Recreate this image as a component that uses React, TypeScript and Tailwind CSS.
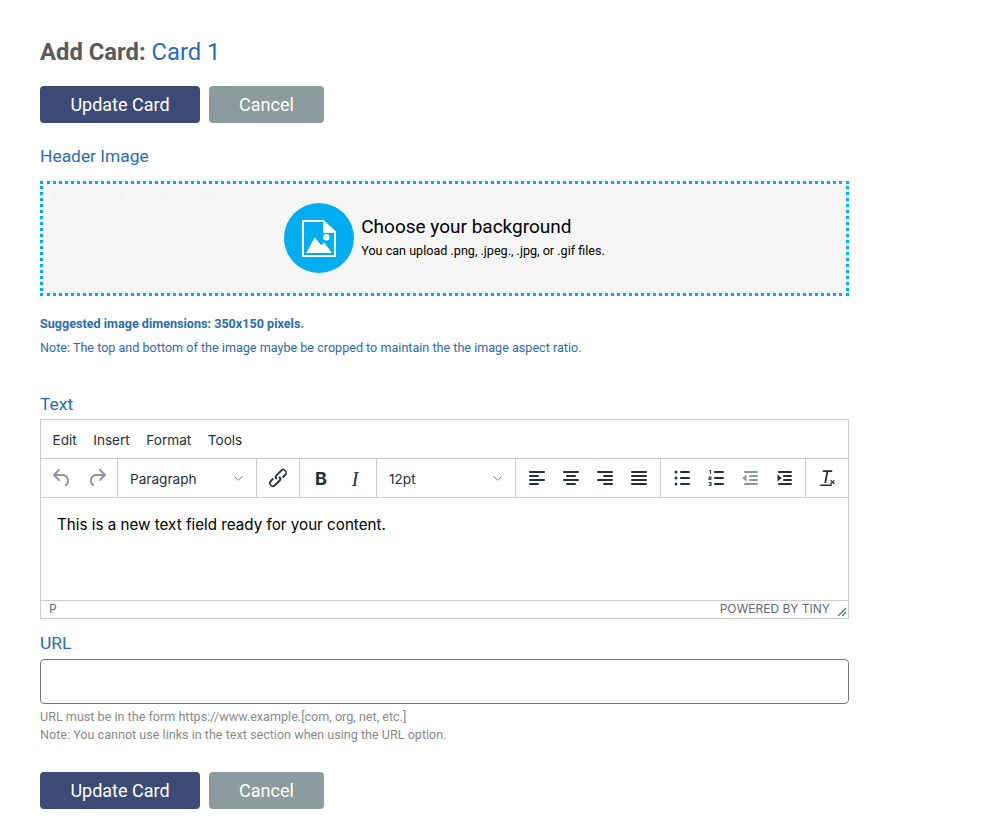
import { ChevronDown } from 'lucide-react';
import type { ReactNode } from 'react';

const Actions = () => (
  <div className="flex gap-[9px]">
    <button type="button" className="h-[37px] w-[160px] rounded-[4px] bg-[#3c4a76] text-[18px] text-white">
      Update Card
    </button>
    <button type="button" className="h-[37px] w-[115px] rounded-[4px] bg-[#8c9c9e] text-[18px] text-white">
      Cancel
    </button>
  </div>
);

const Label = ({ children }: { children: ReactNode }) => (
  <div className="text-[17.4px] leading-[24px] text-[#2b6cb0]">{children}</div>
);

const Icon = ({ d, className = 'text-[#222f3e]' }: { d: string; className?: string }) => (
  <svg width="24" height="24" viewBox="0 0 24 24" fill="currentColor" className={className}>
    <path d={d} />
  </svg>
);

const icons = {
  undo: 'M6.4 8H12c3.7 0 6.2 2 6.8 5.1.6 2.7-.4 5.6-2.3 6.8a1 1 0 0 1-1-1.800c1.100-.6 1.800-2.700 1.400-4.600-.5-2.100-2.100-3.500-4.900-3.500H6.400l3.300 3.300a1 1 0 1 1-1.400 1.400l-5-5a1 1 0 0 1 0-1.400l5-5a1 1 0 0 1 1.400 1.400L6.400 8z',
  redo: 'M17.6 10H12c-2.800 0-4.400 1.400-4.900 3.500-.4 2 .3 4 1.400 4.600a1 1 0 1 1-1 1.800c-2-1.200-2.900-4.100-2.300-6.800.6-3 3.100-5.100 6.800-5.100h5.600l-3.300-3.300a1 1 0 1 1 1.400-1.400l5 5a1 1 0 0 1 0 1.400l-5 5a1 1 0 0 1-1.400-1.400l3.300-3.300z',
  link: 'M6.200 12.300a1 1 0 0 1 1.400 1.400l-2.100 2.100a2 2 0 1 0 2.800 2.800l4.800-4.800a1 1 0 0 0 0-1.400 1 1 0 1 1 1.400-1.300 2.900 2.900 0 0 1 0 4L9.600 20a3.900 3.900 0 0 1-5.500-5.500l2-2.200zm11.600-.6a1 1 0 0 1-1.400-1.400l2-2a2 2 0 1 0-2.700-2.800L11 10a1 1 0 0 0 0 1.400A1 1 0 1 1 9.600 13a2.900 2.900 0 0 1 0-4L14.400 4a3.900 3.900 0 0 1 5.500 5.500l-2.100 2.200z',
  alignLeft: 'M5 5h14a1 1 0 0 1 0 2H5a1 1 0 1 1 0-2zm0 4h8a1 1 0 0 1 0 2H5a1 1 0 1 1 0-2zm0 8h8a1 1 0 0 1 0 2H5a1 1 0 0 1 0-2zm0-4h14a1 1 0 0 1 0 2H5a1 1 0 0 1 0-2z',
  alignCenter: 'M5 5h14a1 1 0 0 1 0 2H5a1 1 0 1 1 0-2zm3 4h8a1 1 0 0 1 0 2H8a1 1 0 1 1 0-2zm0 8h8a1 1 0 0 1 0 2H8a1 1 0 0 1 0-2zm-3-4h14a1 1 0 0 1 0 2H5a1 1 0 0 1 0-2z',
  alignRight: 'M5 5h14a1 1 0 0 1 0 2H5a1 1 0 1 1 0-2zm6 4h8a1 1 0 0 1 0 2h-8a1 1 0 0 1 0-2zm0 8h8a1 1 0 0 1 0 2h-8a1 1 0 0 1 0-2zm-6-4h14a1 1 0 0 1 0 2H5a1 1 0 0 1 0-2z',
  justify: 'M5 5h14a1 1 0 0 1 0 2H5a1 1 0 1 1 0-2zm0 4h14a1 1 0 0 1 0 2H5a1 1 0 1 1 0-2zm0 4h14a1 1 0 0 1 0 2H5a1 1 0 0 1 0-2zm0 4h14a1 1 0 0 1 0 2H5a1 1 0 0 1 0-2z',
  bullets: 'M11 5h8a1 1 0 0 1 0 2h-8a1 1 0 0 1 0-2zm0 6h8a1 1 0 0 1 0 2h-8a1 1 0 0 1 0-2zm0 6h8a1 1 0 0 1 0 2h-8a1 1 0 0 1 0-2zM4.500 6a1.500 1.500 0 1 1 3 0 1.500 1.500 0 0 1-3 0zm0 6a1.500 1.500 0 1 1 3 0 1.500 1.500 0 0 1-3 0zm0 6a1.500 1.500 0 1 1 3 0 1.500 1.500 0 0 1-3 0z',
  numbers: 'M11 5h8a1 1 0 0 1 0 2h-8a1 1 0 0 1 0-2zm0 6h8a1 1 0 0 1 0 2h-8a1 1 0 0 1 0-2zm0 6h8a1 1 0 0 1 0 2h-8a1 1 0 0 1 0-2zM6 4h1v4H6V5H5V4.500zM4.500 10.500h3v2.200H5.500v.6h2v.7h-3v-2.200h2v-.6h-2zM4.500 16h3v4h-3v-.7h2v-.9h-1.500v-.7h1.500v-1h-2z',
  outdent: 'M7 5h12a1 1 0 0 1 0 2H7a1 1 0 1 1 0-2zm5 4h7a1 1 0 0 1 0 2h-7a1 1 0 0 1 0-2zm0 4h7a1 1 0 0 1 0 2h-7a1 1 0 0 1 0-2zm-5 4h12a1 1 0 0 1 0 2H7a1 1 0 0 1 0-2zM4.300 12L8.500 8.500v7z',
  indent: 'M7 5h12a1 1 0 0 1 0 2H7a1 1 0 1 1 0-2zm5 4h7a1 1 0 0 1 0 2h-7a1 1 0 0 1 0-2zm0 4h7a1 1 0 0 1 0 2h-7a1 1 0 0 1 0-2zm-5 4h12a1 1 0 0 1 0 2H7a1 1 0 0 1 0-2zM9.700 12L5.500 8.500v7z',
  clear: 'M13.200 6l-2.100 11H9.500a.9.900 0 0 0 0 0h-.2l2.100-11H8.500a.9.900 0 0 1 0-1.800h8a.9.900 0 0 1 0 1.800h-3.300zM5.800 18.500h10.400a.8.800 0 0 1 0 1.600H5.800a.8.800 0 0 1 0-1.600zM16 13.800l1.500 1.500 1.500-1.500.8.800-1.500 1.500 1.500 1.500-.8.800-1.500-1.500-1.500 1.500-.8-.8 1.500-1.500-1.500-1.500z',
};

const Select = ({ label }: { label: string }) => (
  <div className="flex h-full w-[139px] items-center justify-between border-r border-[#ccc] pl-[12px] pr-[10px] text-[13.6px] text-[#222f3e]">
    <span className="mt-[3px]">{label}</span>
    <ChevronDown size={15} strokeWidth={1.5} className="mt-[1px] text-[#6b7683]" />
  </div>
);

const Editor = () => (
  <div className="flex h-[200px] flex-col border border-[#ccc] font-['Inter',sans-serif] text-[#222f3e]">
    <div className="flex h-[39px] shrink-0 items-center gap-[16.500px] border-b border-[#ccc] pl-[11.5px] pt-[3px] text-[13.6px]">
      <span>Edit</span>
      <span>Insert</span>
      <span>Format</span>
      <span>Tools</span>
    </div>
    <div className="flex h-[39px] shrink-0 items-center border-b border-[#ccc]">
      <div className="flex h-full w-[77px] items-center justify-center gap-[11px] border-r border-[#ccc]">
        <Icon d={icons.undo} className="text-[#8f97a1]" />
        <Icon d={icons.redo} className="text-[#8f97a1]" />
      </div>
      <Select label="Paragraph" />
      <div className="flex h-full w-[43px] items-center justify-center border-r border-[#ccc]">
        <Icon d={icons.link} />
      </div>
      <div className="flex h-full w-[77px] items-center gap-[10px] border-r border-[#ccc] pl-[9px] pt-[2px]">
        <span className="w-[24px] text-center text-[18px] font-bold leading-none">B</span>
        <span className="w-[24px] text-center font-['Liberation_Serif',serif] text-[20px] italic leading-none">I</span>
      </div>
      <Select label="12pt" />
      <div className="flex h-full w-[145px] items-center gap-[10px] border-r border-[#ccc] pl-[9px]">
        <Icon d={icons.alignLeft} />
        <Icon d={icons.alignCenter} />
        <Icon d={icons.alignRight} />
        <Icon d={icons.justify} />
      </div>
      <div className="flex h-full w-[145px] items-center gap-[10px] border-r border-[#ccc] pl-[9px]">
        <Icon d={icons.bullets} />
        <Icon d={icons.numbers} />
        <Icon d={icons.outdent} className="text-[#8f97a1]" />
        <Icon d={icons.indent} />
      </div>
      <div className="flex h-full flex-1 items-center justify-center">
        <Icon d={icons.clear} />
      </div>
    </div>
    <div className="flex-1 pl-[16px] pt-[15px] text-[15.2px] leading-[24px] text-black">
      This is a new text field ready for your content.
    </div>
    <div className="relative flex h-[18px] shrink-0 items-center justify-between border-t border-[#ccc] pl-[8px] pr-[18px] text-[12px] text-[#606b78]">
      <span>P</span>
      <span>POWERED BY TINY</span>
      <svg className="absolute bottom-[1px] right-[1px]" width="10" height="10" viewBox="0 0 10 10" stroke="currentColor" strokeWidth="1.2">
        <path d="M1 9l8-8M5 9l4-4" />
      </svg>
    </div>
  </div>
);

export default function App() {
  return (
    <div className="min-h-[830px] bg-white pl-[40px] font-['Roboto',sans-serif]">
      <div className="w-[809px]">
        <h1 className="pt-[37px] text-[23.8px] font-bold leading-[30px] text-[#5a5a5a]">
          Add Card: <span className="font-normal text-[#2b6cb0]">Card 1</span>
        </h1>
        <div className="mt-[19px]">
          <Actions />
        </div>
        <div className="mt-[21px]">
          <Label>Header Image</Label>
        </div>
        <div className="relative mt-[13px] flex h-[115px] items-center justify-center border-[3px] border-dotted border-[#00aeef] bg-[#f6f6f6] pb-[1px]">
          <span className="absolute left-[10px] top-[1px] text-[14px] text-[#f3f3f3]">Choose File No file chosen</span>
          <div className="flex items-center gap-[7px]">
            <div className="flex h-[70px] w-[70px] items-center justify-center rounded-full bg-[#00aeef]">
              <svg width="34" height="37" viewBox="0 0 34 37" fill="white" fillRule="evenodd">
                <path d="M0 0h21.500L34 11.500V37H0zM2 2v33h30V13H21V2z" />
                <path d="M23 3.500L31 11H23z" />
                <path d="M4.300 33L12.700 17.300l6.500 8 2.800-2.800L30 33z" />
                <circle cx="24.300" cy="17.300" r="3.300" />
              </svg>
            </div>
            <div className="mt-[2px] text-black">
              <div className="text-[19px] leading-[24px]">Choose your background</div>
              <div className="text-[12.6px] leading-[24px]">You can upload .png, .jpeg., .jpg, or .gif files.</div>
            </div>
          </div>
        </div>
        <div className="mt-[16px] text-[12.6px] font-bold leading-[23px] text-[#2b6cb0]">
          Suggested image dimensions: 350x150 pixels.
        </div>
        <div className="mt-[1px] text-[12.6px] leading-[23px] text-[#2b6cb0]">
          Note: The top and bottom of the image maybe be cropped to maintain the the image aspect ratio.
        </div>
        <div className="mt-[32.500px] mb-[3px]">
          <Label>Text</Label>
        </div>
        <Editor />
        <div className="mt-[12px] mb-[4px]">
          <Label>URL</Label>
        </div>
        <input type="text" className="block h-[45px] w-full rounded-[4px] border border-[#777] bg-white" />
        <div className="mt-[4px] text-[12.6px] leading-[18px] text-[#8a8a8a]">
          <div>URL must be in the form https://www.example.[com, org, net, etc.]</div>
          <div>Note: You cannot use links in the text section when using the URL option.</div>
        </div>
        <div className="mt-[28px]">
          <Actions />
        </div>
      </div>
    </div>
  );
}
